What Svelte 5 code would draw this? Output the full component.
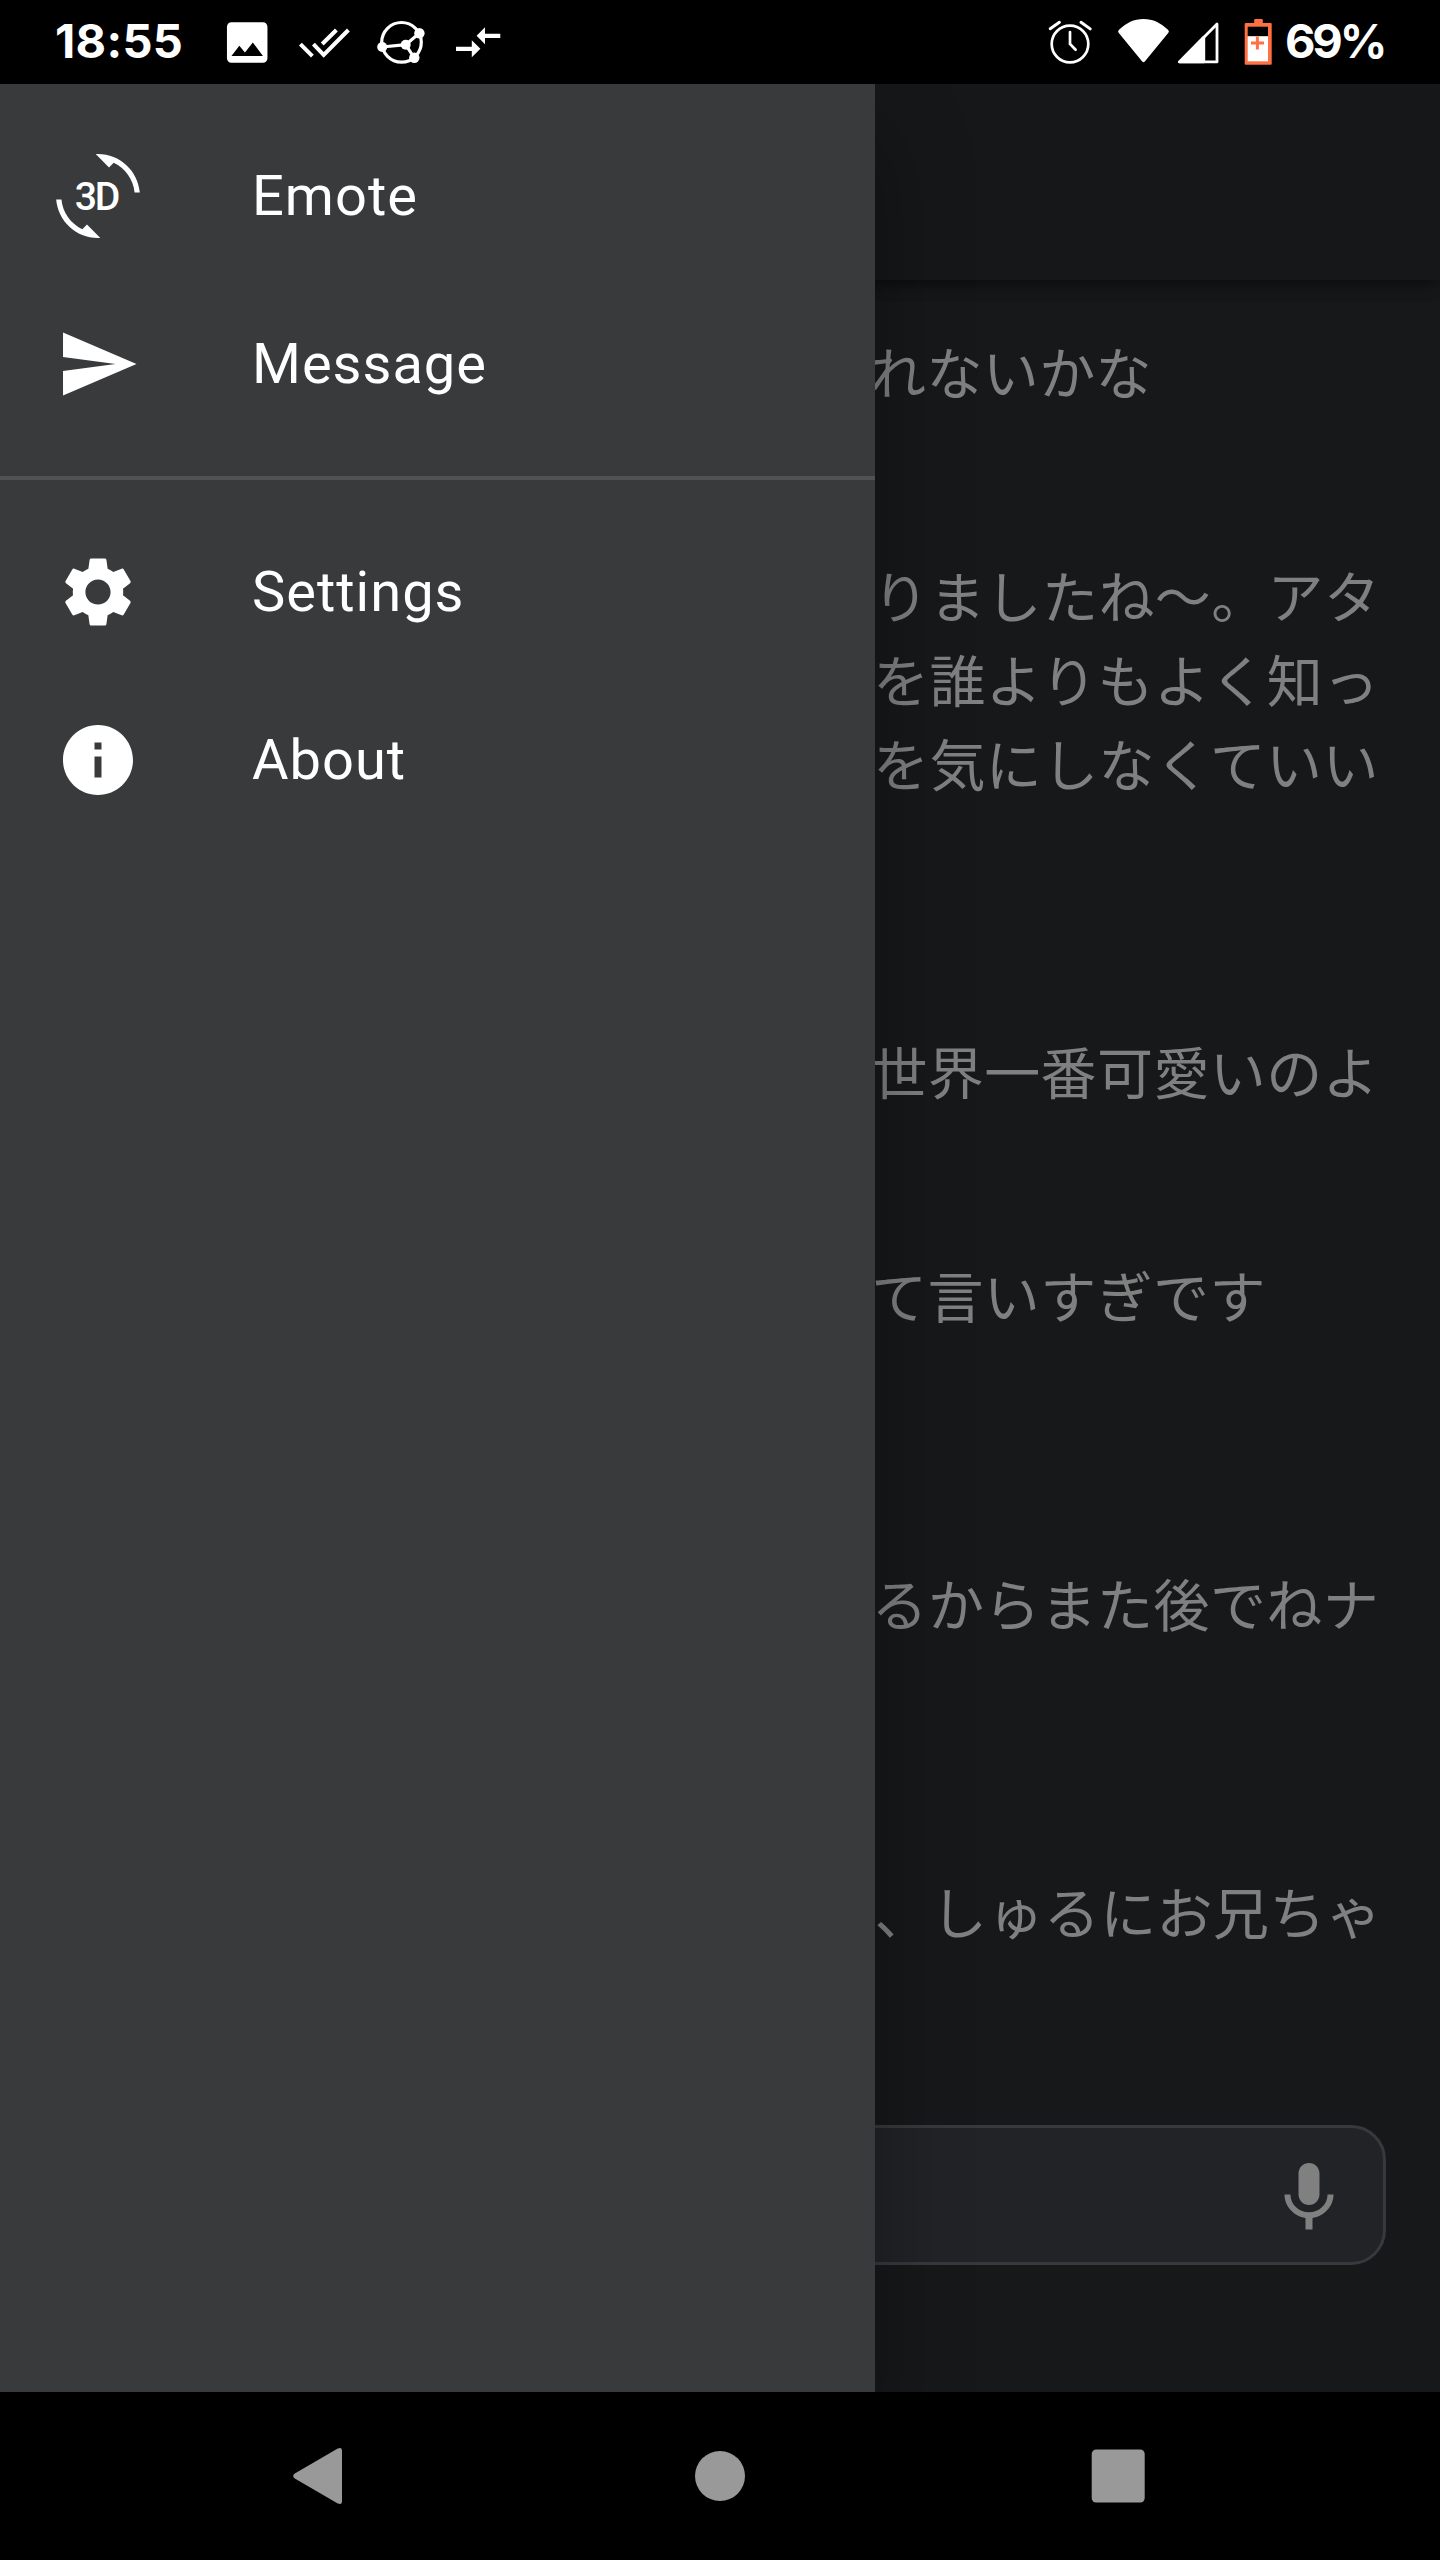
<script>
  // `start` is where the visible part of each line begins beside the drawer
  const messages = [
    { rows: 1, lines: [{ text: 'れないかな', start: 870 }] },
    {
      rows: 4,
      lines: [
        { text: 'りましたね〜。アタ', start: 872.8 },
        { text: 'を誰よりもよく知っ', start: 873 },
        { text: 'を気にしなくていい', start: 873 }
      ]
    },
    { rows: 1, lines: [{ text: '世界一番可愛いのよ', start: 871.4 }] },
    { rows: 2, lines: [{ text: 'て言いすぎです', start: 871 }] },
    { rows: 2, lines: [{ text: 'るからまた後でねナ', start: 871.5 }] },
    { rows: 1, lines: [{ text: '、しゅるにお兄ちゃ', start: 874.6 }] }
  ];

  const icons = {
    send: 'M2.01 21L23 12 2.01 3 2 10l15 2-15 2z',
    settings:
      'M19.14 12.94c.04-.3.06-.61.06-.94 0-.32-.02-.64-.07-.94l2.03-1.58c.18-.14.23-.41.12-.61l-1.92-3.32c-.12-.22-.37-.29-.59-.22l-2.39.96c-.5-.38-1.03-.7-1.62-.94L14.4 2.81c-.04-.24-.24-.41-.48-.41h-3.84c-.24 0-.43.17-.47.41L9.25 5.35C8.66 5.59 8.12 5.92 7.63 6.29L5.24 5.33c-.22-.08-.47 0-.59.22L2.74 8.87c-.12.21-.08.47.12.61l2.03 1.58C4.84 11.36 4.8 11.69 4.8 12s.02.64.07.94l-2.03 1.58c-.18.14-.23.41-.12.61l1.92 3.32c.12.22.37.29.59.22l2.39-.96c.5.38 1.03.7 1.62.94l.36 2.54c.05.24.24.41.48.41h3.84c.24 0 .44-.17.47-.41l.36-2.54c.59-.24 1.13-.56 1.62-.94l2.39.96c.22.08.47 0 .59-.22l1.92-3.32c.12-.22.07-.47-.12-.61L19.14 12.94zM12 15.6c-1.98 0-3.6-1.62-3.6-3.6s1.62-3.6 3.6-3.6 3.6 1.62 3.6 3.6-1.62 3.6-3.6 3.6z',
    info: 'M12 2C6.48 2 2 6.48 2 12s4.48 10 10 10 10-4.48 10-10S17.52 2 12 2zm1 15h-2v-6h2v6zm0-8h-2V7h2v2z',
    rotate:
      'M7.52 21.48C4.25 19.94 1.91 16.76 1.55 13H.05C.56 19.16 5.71 24 12 24l.66-.03-3.81-3.81-1.33 1.32zM16.48 2.52c3.27 1.54 5.61 4.72 5.97 8.48h1.5C23.44 4.84 18.29 0 12 0l-.66.03 3.81 3.81 1.33-1.32z'
  };

  const groups = [
    [
      { label: 'Emote', icon: 'rotate' },
      { label: 'Message', icon: 'send' }
    ],
    [
      { label: 'Settings', icon: 'settings' },
      { label: 'About', icon: 'info' }
    ]
  ];
</script>

<div class="screen">
  <header class="status">
    <span class="clock">18:55</span>
    <svg viewBox="220 0 70 84" fill="#fff">
      <path transform="translate(220.2 15.4) scale(2.25)" d="M21 19V5c0-1.1-.9-2-2-2H5c-1.1 0-2 .9-2 2v14c0 1.1.9 2 2 2h14c1.1 0 2-.9 2-2zM8.5 13.5l2.5 3.01L14.5 12l4.5 6H5l3.5-4.5z" />
    </svg>
    <svg viewBox="290 0 80 84" fill="none" stroke="#fff" stroke-width="4">
      <path d="M300.4 44.2L312.4 56.2M313.4 44.2L323.7 54.8L348.4 30M322.2 44L336.4 30" />
    </svg>
    <svg viewBox="370 0 76 84" fill="#fff">
      <circle cx="401.5" cy="42.3" r="19.8" fill="none" stroke="#fff" stroke-width="3.2" />
      <path d="M382 47L405.7 44.7L419.3 33.3M405.7 44.7L414.3 58" fill="none" stroke="#fff" stroke-width="3.2" />
      <circle cx="382.2" cy="47" r="5" />
      <circle cx="405.7" cy="44.7" r="5" />
      <circle cx="419.4" cy="33.3" r="5.2" />
      <circle cx="414.3" cy="57.8" r="5.2" />
    </svg>
    <svg viewBox="446 0 60 84" fill="#fff">
      <path d="M476.6 35.8L485 27.3V33.8H500.3V38H485V44.3ZM480.4 48.8L471.8 57.3V51H456V46.8H471.8V40.3Z" />
    </svg>
    <span></span>
    <svg viewBox="1040 0 64 84" fill="none" stroke="#fff" stroke-width="2.7" stroke-linecap="round">
      <circle cx="1070" cy="44" r="18.3" />
      <path d="M1070 32V44L1075.6 49.8" />
      <path d="M1050.2 28.7L1059.4 22.3M1081 22.3L1090.2 28.9" stroke-width="3" />
    </svg>
    <svg viewBox="1104 0 70 84" fill="#fff">
      <path d="M1118.6 32.8Q1117.4 31.2 1119 29.8C1126 23 1134 19 1143.5 19S1161 23 1168 29.8Q1169.6 31.2 1168.4 32.8L1144.8 61.6Q1143.5 63 1142.2 61.6Z" />
    </svg>
    <svg viewBox="1174 0 60 84" fill="none" stroke="#fff" stroke-width="2.8" stroke-linejoin="round">
      <path d="M1179.5 61.9L1217 24V61.9Z" />
      <path d="M1179.5 61.9L1203.8 37.2V61.9Z" fill="#fff" />
    </svg>
    <svg viewBox="1234 0 46 84">
      <path d="M1254.5 19h6.6q1 0 1 1v3h7.9q1 0 1 1v39.7q0 1-1 1h-25q-1 0-1-1v-39.7q0-1 1-1h8.5v-3q0-1 1-1Z" transform="translate(.7 0)" fill="#ff7043" />
      <path d="M1247.7 26.7h20.3v9.6h-20.3Z" fill="#000" />
      <path d="M1247.7 36.3h20.3v25h-20.3Z" fill="#fff" />
      <path d="M1257.4 36.5v13M1251 43h13" stroke="#ff7043" stroke-width="3" />
    </svg>
    <span class="percent">69%</span>
  </header>

  <div class="app">
    <div class="appbar"></div>
    <main>
      {#each messages as message}
        <div class="message rows-{message.rows}">
          {#each message.lines as line}
            <p style:padding-left="{line.start}px">{line.text}</p>
          {/each}
        </div>
      {/each}
    </main>
    <div class="composer">
      <svg class="mic" viewBox="0 0 24 24" fill="#808080">
        <path d="M12 14c1.66 0 2.99-1.34 2.99-3L15 5c0-1.66-1.34-3-3-3S9 3.34 9 5v6c0 1.66 1.34 3 3 3zm5.3-3c0 3-2.54 5.1-5.3 5.1S6.7 14 6.7 11H5c0 3.41 2.72 6.23 6 6.72V21h2v-3.28c3.28-.48 6-3.3 6-6.72h-1.7z" />
      </svg>
    </div>

    <nav class="drawer">
      {#each groups as group}
        <div class="group">
          {#each group as item}
            <div class="item">
              <svg class="icon" viewBox="0 0 24 24" fill="#fff">
                <path d={icons[item.icon]} />
                {#if item.icon === 'rotate'}
                  <text x="5.35" y="16" class="three-d">3D</text>
                {/if}
              </svg>
              <span>{item.label}</span>
            </div>
          {/each}
        </div>
      {/each}
    </nav>
  </div>

  <footer class="navbar">
    <svg viewBox="0 0 84 84" fill="#999">
      <path d="M15.8 39.5L58.3 14.800Q63 12.5 63 17V67Q63 71.5 58.3 69.2L15.8 44.5Q12.5 42 15.8 39.5Z" />
    </svg>
    <svg viewBox="0 0 84 84" fill="#999"><circle cx="42" cy="42" r="25" /></svg>
    <svg viewBox="0 0 84 84" fill="#999"><rect x="14.7" y="15.5" width="53" height="53" rx="4.5" /></svg>
  </footer>
</div>

<style>
  :global(body) {
    margin: 0;
    background: #000;
  }
  .screen {
    width: 1440px;
    height: 2560px;
    display: flex;
    flex-direction: column;
    background: #000;
    color: #fff;
    font-family: Roboto, 'Noto Sans CJK JP', sans-serif;
    overflow: hidden;
  }
  .status {
    height: 84px;
    box-sizing: border-box;
    padding-left: 55px;
    display: grid;
    grid-template-columns: 165px 70px 80px 76px 60px 1fr 64px 70px 60px 46px 160px;
    font: 700 47px/82px Inter, sans-serif;
  }
  .status svg {
    width: 100%;
    height: 84px;
    display: block;
  }
  .clock {
    letter-spacing: 0.3px;
    white-space: nowrap;
  }
  .percent {
    padding-left: 5px;
    letter-spacing: -3.2px;
  }
  .app {
    height: 2308px;
    position: relative;
    display: flex;
    flex-direction: column;
    background: #17181a;
    overflow: hidden;
  }
  .appbar {
    height: 196px;
    flex: none;
    background: #161719;
    box-shadow: 0 7px 14px -3px rgba(0, 0, 0, 0.4), 0 4px 18px rgba(0, 0, 0, 0.15);
  }
  main {
    flex: 1;
    padding-top: 48px;
    display: flex;
    flex-direction: column;
    gap: 140px;
    color: #808080;
    font: 400 56px/84px 'Noto Sans CJK JP', sans-serif;
    letter-spacing: 0.4px;
  }
  .message {
    min-height: 84px;
    white-space: nowrap;
  }
  .rows-2 {
    min-height: 168px;
  }
  .rows-4 {
    min-height: 336px;
  }
  p {
    margin: 0;
  }
  .composer {
    flex: none;
    box-sizing: border-box;
    height: 140px;
    margin: 0 54px 127px 56px;
    padding: 0 32px 0 0;
    border: 3px solid #38393c;
    border-radius: 35px;
    background: #222327;
    display: flex;
    justify-content: flex-end;
    align-items: center;
  }
  .mic {
    width: 84px;
    height: 84px;
    margin-top: 6px;
  }
  .drawer {
    position: absolute;
    inset: 0 auto 0 0;
    width: 875px;
    background: #393a3c;
    box-shadow: 0 50px 84px rgba(0, 0, 0, 0.34);
  }
  .group {
    padding: 28px 0;
  }
  .group + .group {
    border-top: 4px solid #505153;
  }
  .item {
    height: 168px;
    padding-left: 56px;
    display: flex;
    align-items: center;
    gap: 112px;
    font-size: 56px;
    letter-spacing: 1px;
  }
  .icon {
    width: 84px;
    height: 84px;
    flex: none;
    overflow: visible;
  }
  .three-d {
    font: 500 11.2px Roboto, sans-serif;
    letter-spacing: -0.65px;
  }
  .navbar {
    height: 168px;
    display: grid;
    grid-template-columns: 84px 84px 84px;
    justify-content: center;
    align-items: center;
    column-gap: 315px;
  }
  .navbar svg {
    width: 84px;
    height: 84px;
  }
</style>
